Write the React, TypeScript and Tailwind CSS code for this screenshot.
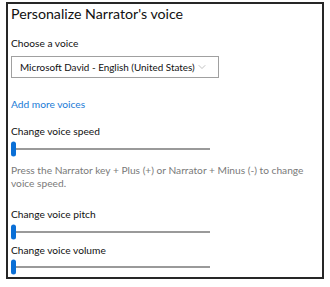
import { ChevronDown } from "lucide-react";

function Slider({ className = "" }: { className?: string }) {
  return (
    <div className={`relative flex h-[18px] w-[199px] items-center ${className}`}>
      <div className="h-[2px] w-full bg-[#9a9a9a]" />
      <div className="absolute left-0 top-1/2 h-[15px] w-[5px] -translate-y-1/2 rounded-full bg-[#0a6fd6]" />
    </div>
  );
}

export default function App() {
  return (
    <div className="h-[287px] w-[330px] bg-white pl-[6px] pt-[2px] font-['Lato',sans-serif] text-[#111]">
      <div className="h-[277px] w-[318px] border-2 border-[#262626] pl-[3px]">
        <h1 className="h-[20px] whitespace-nowrap text-[14.2px] leading-[20px]">Personalize Narrator's voice</h1>

        <p className="mt-[11px] text-[10.2px] leading-[16px]">Choose a voice</p>
        <button className="mt-[5px] flex h-[22px] w-[208px] items-center justify-between border border-[#a0a0a0] pl-[8px] pr-[10px] text-[9.9px]">
          <span className="whitespace-nowrap">Microsoft David - English (United States)</span>
          <ChevronDown className="size-[12px] shrink-0 text-[#999]" strokeWidth={1.2} />
        </button>

        <a className="mt-[18px] block text-[10.2px] leading-[16px] text-[#1a7ad6]">Add more voices</a>

        <p className="mt-[11px] text-[10.2px] leading-[16px]">Change voice speed</p>
        <Slider className="mt-[1px]" />
        <p className="mt-[6px] w-[300px] text-[10.2px] leading-[13px] text-[#7a7a7a]">
          Press the Narrator key + Plus (+) or Narrator + Minus (-) to change voice speed.
        </p>

        <p className="mt-[16px] text-[10.2px] leading-[16px]">Change voice pitch</p>
        <Slider className="mt-[1px]" />

        <p className="mt-[1px] text-[10.2px] leading-[16px]">Change voice volume</p>
        <Slider />
      </div>
    </div>
  );
}
